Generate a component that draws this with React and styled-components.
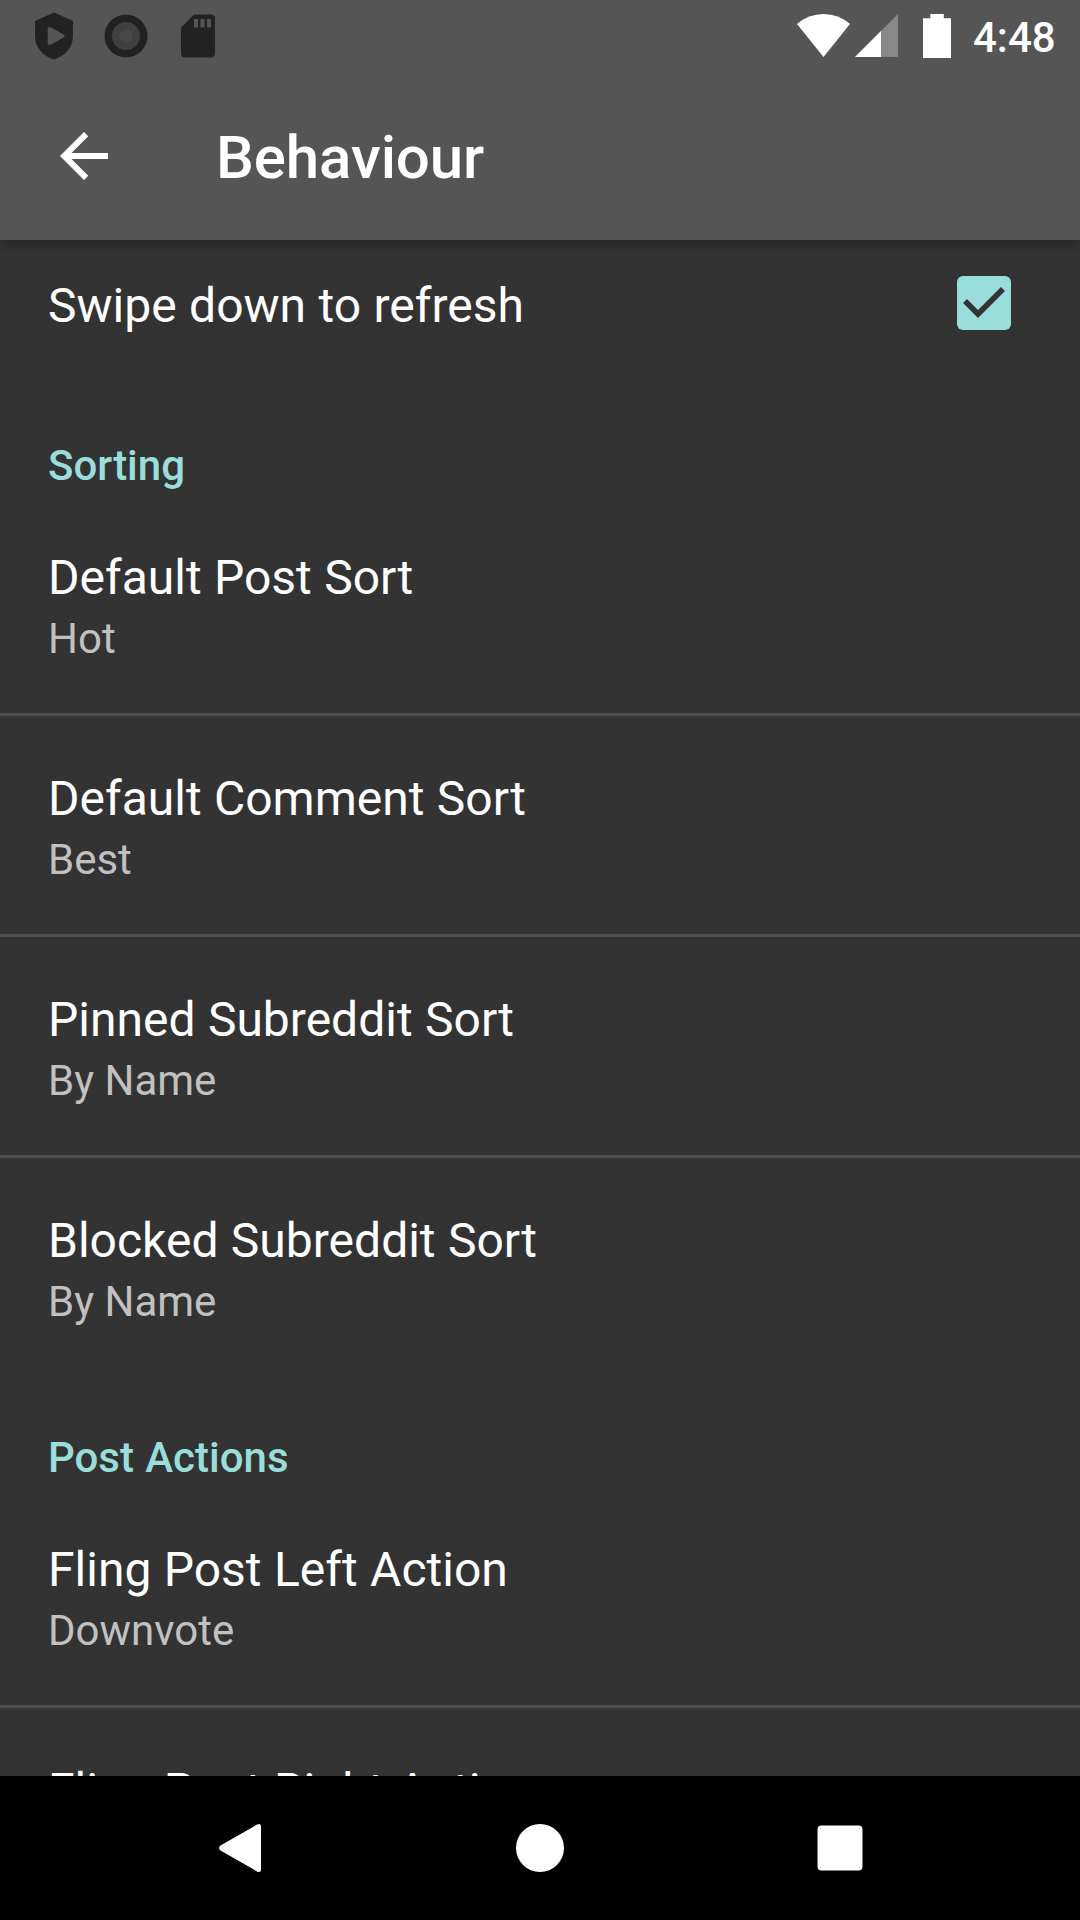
import React from "react";
import styled, { createGlobalStyle } from "styled-components";

const GlobalStyle = createGlobalStyle`
  *, *::before, *::after { box-sizing: border-box; }
  body { margin: 0; background: #333333; }
`;

const Screen = styled.div`
  display: flex;
  flex-direction: column;
  width: 1080px;
  height: 1920px;
  overflow: hidden;
  background: #333333;
  color: #ffffff;
  font-family: Roboto, "Noto Sans", sans-serif;
`;

const TopArea = styled.header`
  flex: none;
  position: relative;
  z-index: 1;
  background: #555555;
  box-shadow: 0 4px 12px rgba(0, 0, 0, 0.3);
`;

const StatusBar = styled.div`
  display: flex;
  align-items: center;
  justify-content: space-between;
  height: 72px;
`;

const StatusGroup = styled.div`
  display: flex;
  align-items: center;
`;

const StatusIcon = styled.svg`
  display: block;
  width: ${(p) => p.$width}px;
  height: 72px;
`;

const Clock = styled.time`
  width: 107px;
  font-size: 42px;
  font-weight: 500;
  line-height: 50px;
  padding-top: 4px;
`;

const Toolbar = styled.div`
  display: flex;
  align-items: center;
  height: 168px;
  padding-left: 48px;
`;

const BackButton = styled.button`
  width: 72px;
  height: 72px;
  margin-right: 96px;
  padding: 0;
  border: 0;
  background: none;
  color: inherit;

  svg { display: block; }
`;

const PageTitle = styled.h1`
  margin: 0;
  font-size: 60px;
  font-weight: 500;
  line-height: 70px;
  letter-spacing: -0.08px;
  padding-top: 4px;
`;

const SettingsList = styled.main`
  flex: 1;
  min-height: 0;
  overflow: hidden;
`;

const ToggleRow = styled.div`
  display: flex;
  align-items: flex-start;
  justify-content: space-between;
  height: 144px;
  padding: 36px 69px 0 48px;
`;

const CheckBox = styled.span`
  width: 54px;
  height: 54px;
  border-radius: 6px;
  background: #9adedc;

  svg { display: block; }
`;

const SectionTitle = styled.h2`
  height: 111px;
  margin: 0;
  padding: 57px 48px 0;
  color: #9adedc;
  font-size: 42px;
  font-weight: 500;
  line-height: 49px;
  word-spacing: 0.8px;
`;

const Row = styled.div`
  height: ${(p) => (p.$divided ? 221 : 218)}px;
  padding: 54px 48px 0;
  border-bottom: ${(p) => (p.$divided ? "3px solid #4d4d4d" : "0")};
`;

const RowTitle = styled.div`
  font-size: 48px;
  line-height: 57px;
  word-spacing: 0.5px;
`;

const ToggleTitle = styled(RowTitle)`
  padding-top: 1px;
`;

const RowSummary = styled.div`
  margin-top: 8px;
  color: #c1c1c1;
  font-size: 42px;
  line-height: 49px;
`;

const NavigationBar = styled.nav`
  flex: none;
  display: flex;
  justify-content: center;
  height: 144px;
  background: #000000;
`;

const NavButton = styled.button`
  width: 300px;
  height: 144px;
  padding: 0;
  border: 0;
  background: none;

  svg { display: block; }
`;

const sections = [
  {
    title: "Sorting",
    items: [
      ["Default Post Sort", "Hot"],
      ["Default Comment Sort", "Best"],
      ["Pinned Subreddit Sort", "By Name"],
      ["Blocked Subreddit Sort", "By Name"],
    ],
  },
  {
    title: "Post Actions",
    items: [
      ["Fling Post Left Action", "Downvote"],
      ["Fling Post Right Action", null],
    ],
  },
];

function NotificationIcons() {
  return (
    <StatusIcon $width={240} viewBox="0 0 240 72" fill="#222222">
      <path
        fillRule="evenodd"
        d="M54 12.6 73 21V36C73 47 65 56.500 54 59.500C43 56.500 35 47 35 36V21ZM47.700 29V43Q48 46 51 44.500L64 37.200Q65.500 36 64 34.800L51 27.500Q48 26 47.700 29Z"
      />
      <circle cx="126" cy="36" r="21.500" />
      <circle cx="126" cy="36" r="14" fill="#404040" />
      <circle cx="126" cy="36" r="6.500" fill="#484848" />
      <path d="M194 14.500H210.500Q215 14.500 215 19V53Q215 57.500 210.500 57.500H185.500Q181 57.500 181 53V27.500Z" />
      <path fill="#555555" d="M194 19h4v8.500h-4zM200.500 19h4v8.500h-4zM207 19h4v8.500h-4z" />
    </StatusIcon>
  );
}

function SystemIcons() {
  return (
    <StatusIcon $width={180} viewBox="793 0 180 72" fill="#ffffff">
      <path d="M797 24Q808.500 14 823.500 14T850 24L823.500 57Z" />
      <path fill="#888888" d="M898 14V57H855Z" />
      <path d="M881 31V57H855Z" />
      <path d="M930.300 14h13.500v4.200h7.200v39.800h-28v-39.800h7.300Z" />
    </StatusIcon>
  );
}

function Setting({ title, summary, divided }) {
  return (
    <Row $divided={divided}>
      <RowTitle>{title}</RowTitle>
      {summary && <RowSummary>{summary}</RowSummary>}
    </Row>
  );
}

export default function App() {
  return (
    <>
      <GlobalStyle />
      <Screen>
        <TopArea>
          <StatusBar>
            <NotificationIcons />
            <StatusGroup>
              <SystemIcons />
              <Clock>4:48</Clock>
            </StatusGroup>
          </StatusBar>
          <Toolbar>
            <BackButton aria-label="Back">
              <svg width="72" height="72" viewBox="0 0 24 24" fill="currentColor">
                <path d="M20 11H7.830l5.590-5.590L12 4l-8 8 8 8 1.410-1.410L7.830 13H20v-2z" />
              </svg>
            </BackButton>
            <PageTitle>Behaviour</PageTitle>
          </Toolbar>
        </TopArea>
        <SettingsList>
          <ToggleRow>
            <ToggleTitle>Swipe down to refresh</ToggleTitle>
            <CheckBox role="checkbox" aria-checked="true" aria-label="Swipe down to refresh">
              <svg width="54" height="54" viewBox="0 0 54 54">
                <path d="M8 25 21 38 46 13" fill="none" stroke="#333333" strokeWidth="5.600" />
              </svg>
            </CheckBox>
          </ToggleRow>
          {sections.map((section) => (
            <section key={section.title}>
              <SectionTitle>{section.title}</SectionTitle>
              {section.items.map(([title, summary], index) => (
                <Setting
                  key={title}
                  title={title}
                  summary={summary}
                  divided={index < section.items.length - 1}
                />
              ))}
            </section>
          ))}
        </SettingsList>
        <NavigationBar>
          <NavButton aria-label="Back">
            <svg width="300" height="144" viewBox="90 0 300 144">
              <path
                d="M257 48.600Q261 46.500 261 51V93Q261 97.500 257 95.400L220.500 74.500Q217.500 72 220.500 69.500Z"
                fill="#ffffff"
              />
            </svg>
          </NavButton>
          <NavButton aria-label="Home">
            <svg width="300" height="144" viewBox="0 0 300 144">
              <circle cx="150" cy="72" r="24" fill="#ffffff" />
            </svg>
          </NavButton>
          <NavButton aria-label="Recent apps">
            <svg width="300" height="144" viewBox="0 0 300 144">
              <rect x="127.500" y="49.500" width="45" height="45" rx="4" fill="#ffffff" />
            </svg>
          </NavButton>
        </NavigationBar>
      </Screen>
    </>
  );
}
